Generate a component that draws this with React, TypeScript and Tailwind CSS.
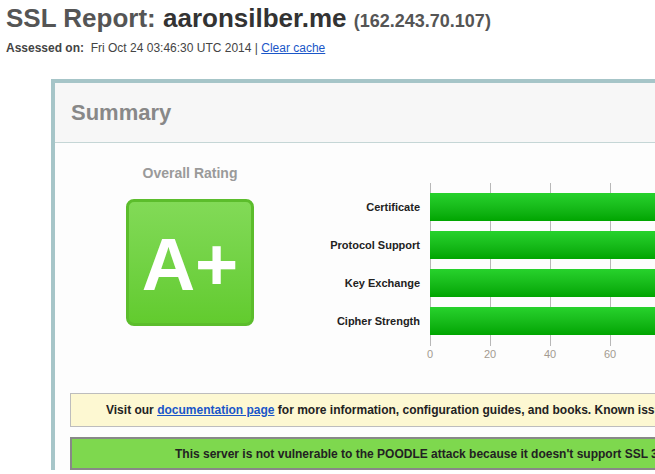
const BARS = ['Certificate', 'Protocol Support', 'Key Exchange', 'Cipher Strength'];
const TICKS = [0, 20, 40, 60];

function Chart() {
  return (
    <div className="ml-[46px] mt-[18px] flex flex-col">
      <div className="relative h-[163px]">
        {TICKS.map((t) => (
          <div
            key={t}
            className="absolute top-0 h-full w-px bg-[#b8b8b8]"
            style={{ left: 130 + t * 3 }}
          />
        ))}
        <div className="relative flex flex-col gap-[10px] pt-[10px]">
          {BARS.map((b) => (
            <div key={b} className="flex h-[28px] items-center">
              <span className="w-[130px] pr-[10px] text-right text-[11px] font-bold text-[#222]">{b}</span>
              <div className="h-[28px] w-[300px] bg-gradient-to-b from-[#27d22c] to-[#00a500]" />
            </div>
          ))}
        </div>
      </div>
      <div className="relative h-[16px]">
        {TICKS.map((t) => (
          <span
            key={t}
            className="absolute top-0 -translate-x-1/2 text-[11px] leading-[16px] text-[#a39a90]"
            style={{ left: 130 + t * 3 }}
          >
            {t}
          </span>
        ))}
      </div>
    </div>
  );
}

export default function App() {
  return (
    <div className="h-[474px] w-[655px] overflow-hidden bg-white font-['Liberation_Sans',Arial,sans-serif]">
      <div className="px-[6px] pt-[3px]">
        <h1 className="whitespace-nowrap text-[26px] font-bold leading-[30px] text-[#555]">
          SSL Report: <span className="text-[#333]">aaronsilber.me</span>{' '}
          <span className="text-[18px]">(162.243.70.107)</span>
        </h1>
        <p className="mt-[4px] whitespace-nowrap text-[12px] leading-[16px] text-[#444]">
          <span className="font-bold">Assessed on:</span>&nbsp; Fri Oct 24 03:46:30 UTC 2014 |{' '}
          <a href="#" className="text-[#1a56c8] underline">Clear cache</a>
        </p>
      </div>

      <div className="ml-[51px] mt-[23px] w-[900px] border-l-4 border-t-4 border-[#a6c5c8] bg-[#fdfdfd]">
        <div className="flex h-[60px] items-center border-b border-[#c5d6d6] bg-[#f7f7f7] pl-[16px]">
          <h2 className="text-[22px] font-bold text-[#888]">Summary</h2>
        </div>

        <div className="pt-[22px]">
          <div className="flex">
            <div className="ml-[71px] flex w-[128px] flex-col items-center">
              <span className="whitespace-nowrap text-[14px] font-bold leading-[16px] text-[#9a9a9a]">Overall Rating</span>
              <div className="mt-[18px] flex h-[127px] w-[128px] items-center justify-center rounded-[8px] border-[3px] border-[#5cbd2c] bg-gradient-to-b from-[#82da57] to-[#62cb2e]">
                <span className="mt-[4px] text-[74px] font-bold leading-none text-white">A+</span>
              </div>
            </div>
            <Chart />
          </div>

          <div className="ml-[15px] mt-[31px] flex h-[34px] w-[800px] items-center border border-[#bdbdbd] bg-[#fdf8d2] pl-[35px]">
            <p className="whitespace-nowrap text-[12px] font-bold text-[#222]">
              Visit our <a href="#" className="text-[#1a56c8] underline">documentation page</a> for more information,
              configuration guides, and books. Known issues are documented here.
            </p>
          </div>
          <div className="ml-[15px] mt-[10px] flex h-[33px] w-[800px] items-center border-2 border-[#888] bg-[#7ed84e] pl-[103px]">
            <p className="whitespace-nowrap text-[12px] font-bold text-[#222]">
              This server is not vulnerable to the POODLE attack because it doesn't support SSL 3.
            </p>
          </div>
        </div>
      </div>
    </div>
  );
}
